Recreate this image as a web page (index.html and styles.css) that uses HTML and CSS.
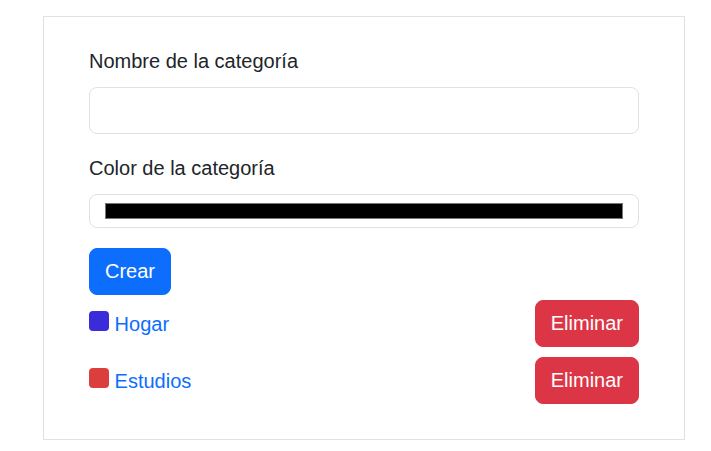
FILE: index.html
```html
<!DOCTYPE html>
<html lang="es">
<head>
<meta charset="utf-8">
<title>Categorías</title>
<link rel="stylesheet" href="styles.css">
</head>
<body>
<div class="page">
  <div class="card">
    <form class="form">
      <label class="label" for="nombre">Nombre de la categoría</label>
      <input class="text-input" id="nombre" type="text">
      <label class="label" for="color">Color de la categoría</label>
      <input class="color-input" id="color" type="color" value="#000000">
      <div class="actions">
        <button type="button" class="btn btn-primary">Crear</button>
      </div>
    </form>
    <ul class="list">
      <li class="row">
        <span class="name"><span class="swatch swatch-blue"></span> <a href="#" class="link">Hogar</a></span>
        <button type="button" class="btn btn-danger">Eliminar</button>
      </li>
      <li class="row">
        <span class="name"><span class="swatch swatch-red"></span> <a href="#" class="link">Estudios</a></span>
        <button type="button" class="btn btn-danger">Eliminar</button>
      </li>
    </ul>
  </div>
</div>
</body>
</html>
```

FILE: styles.css
```css
* { box-sizing: border-box; }
html, body { margin: 0; padding: 0; background: #fff; }
body {
  font-family: "Liberation Sans", Arial, sans-serif;
  font-size: 20px;
  line-height: 30px;
  color: #212529;
}
.page {
  padding: 16px 0 0 43px;
}
.card {
  width: 642px;
  border: 1px solid #dee2e6;
  padding: 29px 45px 30px 45px;
}
.form {
  display: flex;
  flex-direction: column;
  margin: 0;
}
.label {
  display: block;
  line-height: 30px;
  margin-bottom: 11px;
}
.text-input {
  display: block;
  width: 100%;
  height: 47px;
  border: 1px solid #dee2e6;
  border-radius: 8px;
  padding: 8px 16px;
  font: inherit;
  margin-bottom: 19px;
  background: #fff;
}
.color-input {
  display: block;
  width: 100%;
  height: 34px;
  padding: 8px 15px;
  border: 1px solid #dee2e6;
  border-radius: 8px;
  background: #fff;
  margin: 0 0 20px 0;
  -webkit-appearance: none;
  appearance: none;
  cursor: pointer;
}
.color-input::-webkit-color-swatch-wrapper { padding: 0; }
.color-input::-webkit-color-swatch { border: 1px solid #767676; border-radius: 0; }
.actions { display: flex; }
.btn {
  font: inherit;
  line-height: 29px;
  padding: 8px 15px;
  border: 1px solid transparent;
  border-radius: 8px;
  color: #fff;
  cursor: pointer;
}
.btn-primary { background: #0d6efd; border-color: #0d6efd; }
.btn-danger { background: #dc3545; border-color: #dc3545; }
.list {
  list-style: none;
  margin: 0;
  padding: 0;
}
.row {
  display: flex;
  justify-content: space-between;
  align-items: center;
  padding: 5px 0;
}
.name { line-height: 30px; }
.swatch {
  display: inline-block;
  width: 20px;
  height: 20px;
  border-radius: 4px;
}
.swatch-blue { background: #3a2cdb; }
.swatch-red { background: #dc3d3d; }
.link {
  color: #0d6efd;
  text-decoration: none;
}
```
